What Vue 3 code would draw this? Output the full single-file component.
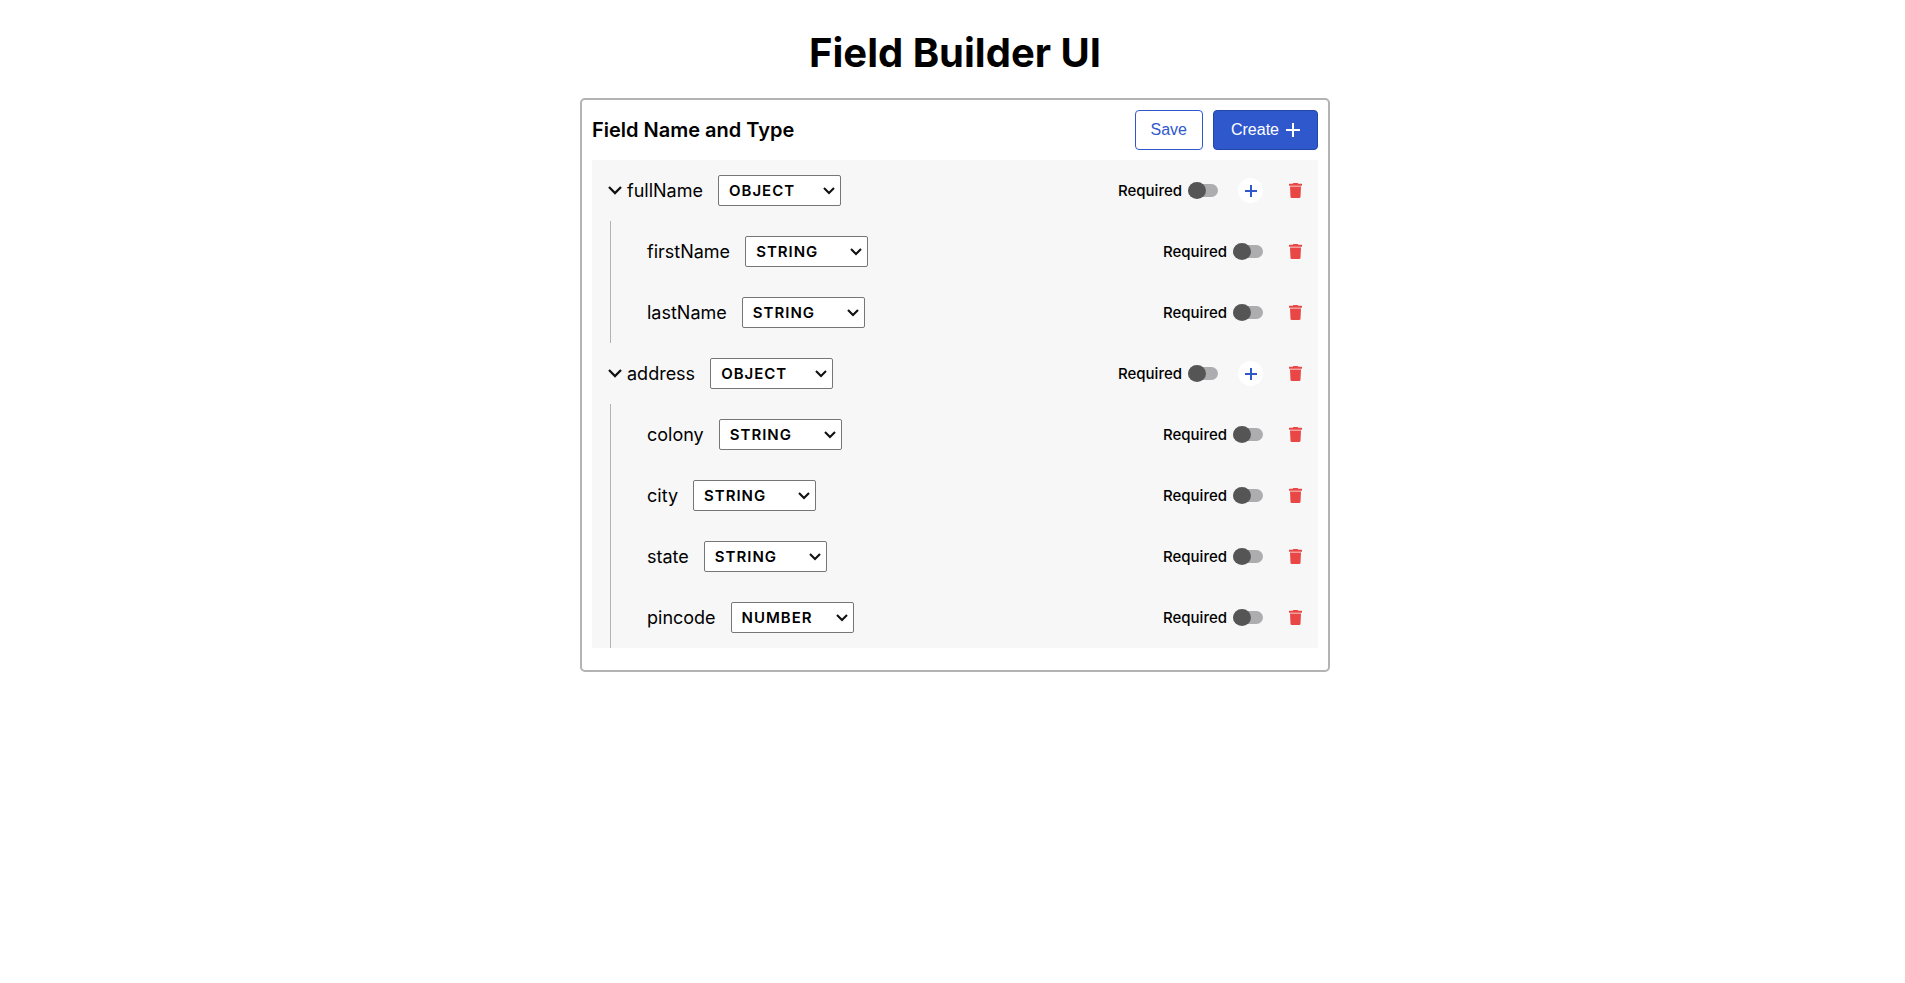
<script setup>
import { ref } from 'vue'

const types = ['STRING', 'NUMBER', 'BOOLEAN', 'OBJECT']

const leaf = (name, type = 'STRING') => ({ name, type, required: false })

const groups = ref([
  {
    name: 'fullName',
    type: 'OBJECT',
    required: false,
    open: true,
    children: [leaf('firstName'), leaf('lastName')],
  },
  {
    name: 'address',
    type: 'OBJECT',
    required: false,
    open: true,
    children: [leaf('colony'), leaf('city'), leaf('state'), leaf('pincode', 'NUMBER')],
  },
])

const rowsOf = (group) => [
  { field: group, isGroup: true },
  ...(group.open ? group.children.map((field) => ({ field, isGroup: false })) : []),
]

function remove(group, field) {
  if (field === group) groups.value = groups.value.filter((g) => g !== group)
  else group.children = group.children.filter((f) => f !== field)
}
</script>

<template>
  <main class="page">
    <h1 class="title">Field Builder UI</h1>
    <section class="card">
      <header class="card-head">
        <h2 class="heading">Field Name and Type</h2>
        <div class="actions">
          <button type="button" class="btn btn-outline">Save</button>
          <button type="button" class="btn btn-solid" @click="groups.push({ ...leaf('field'), open: true, children: [] })">
            Create
            <svg class="icon-create" viewBox="0 0 14 14" aria-hidden="true">
              <path d="M7 0v14M0 7h14" fill="none" stroke="currentColor" stroke-width="2" />
            </svg>
          </button>
        </div>
      </header>

      <div class="fields">
        <div v-for="group in groups" :key="group.name" class="group">
          <div
            v-for="row in rowsOf(group)"
            :key="row.field.name"
            class="row"
            :class="{ 'row-child': !row.isGroup }"
          >
            <div class="side side-left">
              <button
                v-if="row.isGroup"
                type="button"
                class="toggle"
                aria-label="Toggle nested fields"
                @click="group.open = !group.open"
              >
                <svg class="icon-chevron" viewBox="0 0 14 9" aria-hidden="true">
                  <path d="M1 1 7 7 13 1" fill="none" stroke="currentColor" stroke-width="2.3" />
                </svg>
              </button>
              <label class="name" :for="`type-${row.field.name}`">{{ row.field.name }}</label>
              <div class="type-box">
                <select :id="`type-${row.field.name}`" v-model="row.field.type" class="type">
                  <option v-for="t in types" :key="t" :value="t">{{ t }}</option>
                </select>
                <svg class="icon-select" viewBox="0 0 12 8" aria-hidden="true">
                  <path d="M1 1 6 6 11 1" fill="none" stroke="currentColor" stroke-width="2.1" />
                </svg>
              </div>
            </div>
            <div class="side side-right">
              <label class="required">
                Required
                <input v-model="row.field.required" type="checkbox" role="switch" class="switch" />
              </label>
              <button
                v-if="row.isGroup"
                type="button"
                class="add"
                aria-label="Add nested field"
                @click="group.children.push(leaf('field'))"
              >
                <svg class="icon-add" viewBox="0 0 12 12" aria-hidden="true">
                  <path d="M6 0v12M0 6h12" fill="none" stroke="currentColor" stroke-width="2" />
                </svg>
              </button>
              <button type="button" class="trash" aria-label="Delete field" @click="remove(group, row.field)">
                <svg class="icon-trash" viewBox="0 0 13 15" aria-hidden="true">
                  <path
                    fill="currentColor"
                    d="M0 1.1Q0 .7.4.7H3.8L4.3 0H8.7L9.2.7H12.6Q13 .7 13 1.1V2.8H0ZM1 3.5H12L11.5 13.8Q11.4 15 10.2 15H2.8Q1.6 15 1.5 13.8Z"
                  />
                </svg>
              </button>
            </div>
          </div>
        </div>
      </div>
    </section>
  </main>
</template>

<style>
body {
  background: #fff;
}
</style>

<style scoped>
.page {
  display: flex;
  flex-direction: column;
  align-items: center;
  padding: 29px 15px 29px 20px;
  box-sizing: border-box;
  font-family: Inter, "Liberation Sans", sans-serif;
  color: #000;
}

.title {
  margin: 0 0 21px;
  font-size: 40px;
  line-height: 48px;
  font-weight: 700;
}

.card {
  box-sizing: border-box;
  width: 100%;
  max-width: 750px;
  padding: 10px 10px 22px;
  border: 2px solid #b3b3b3;
  border-radius: 5px;
}

.card-head {
  display: flex;
  align-items: center;
  justify-content: space-between;
  margin-bottom: 10px;
}

.heading {
  margin: 0;
  font-size: 20px;
  line-height: 24px;
  font-weight: 600;
}

.actions {
  display: flex;
  gap: 10px;
}

.btn {
  display: flex;
  align-items: center;
  gap: 7px;
  height: 40px;
  padding: 0 15px;
  border-radius: 4px;
  font: 16px "Liberation Sans", Arial, sans-serif;
  cursor: pointer;
}

.btn-outline {
  border: 1px solid #2f58cd;
  background: #fff;
  color: #2f58cd;
}

.btn-solid {
  padding: 0 17px;
  border: 1px solid #2345a3;
  background: #2f58cd;
  color: #fff;
}

.icon-create {
  width: 14px;
  height: 14px;
}

.fields {
  background: #f7f7f7;
}

.row {
  display: flex;
  align-items: center;
  justify-content: space-between;
  padding: 15px 15px 15px 16px;
}

.row-child {
  margin-left: 18px;
  padding-left: 36px;
  border-left: 1px solid #b3b3b3;
}

.side {
  display: flex;
  align-items: center;
}

.toggle,
.add,
.trash {
  display: grid;
  place-items: center;
  padding: 0;
  border: 0;
  background: none;
  cursor: pointer;
}

.toggle {
  margin-right: 5px;
  color: #111;
}

.icon-chevron {
  width: 14px;
  height: 9px;
}

.name {
  margin-right: 15px;
  font-size: 18px;
  line-height: 22px;
}

.type-box {
  position: relative;
  display: flex;
}

.type {
  appearance: none;
  box-sizing: border-box;
  width: 123px;
  height: 31px;
  padding: 0 24px 0 10px;
  border: 1px solid #767676;
  border-radius: 2px;
  background-color: #fff;
  color: #000;
  font: 600 15px Inter, "Liberation Sans", sans-serif;
  letter-spacing: 1px;
}

.icon-select {
  position: absolute;
  top: 12px;
  right: 6px;
  width: 12px;
  height: 8px;
  color: #111;
  pointer-events: none;
}

.required {
  display: flex;
  align-items: center;
  gap: 6px;
  font-size: 15px;
  line-height: 18px;
  font-weight: 500;
}

.switch {
  appearance: none;
  display: flex;
  align-items: center;
  width: 30px;
  height: 13px;
  margin: 0;
  border-radius: 7px;
  background: #adadb0;
  cursor: pointer;
}

.switch::before {
  content: "";
  flex: none;
  width: 18px;
  height: 17px;
  border-radius: 50%;
  background: #555;
}

.switch:checked {
  justify-content: flex-end;
}

.add {
  width: 25px;
  height: 25px;
  margin-left: 20px;
  border-radius: 50%;
  background: #fff;
  color: #2f58cd;
}

.icon-add {
  width: 12px;
  height: 12px;
}

.trash {
  width: 15px;
  height: 25px;
  margin-left: 25px;
  color: #e94646;
}

.icon-trash {
  width: 13px;
  height: 15px;
}
</style>
